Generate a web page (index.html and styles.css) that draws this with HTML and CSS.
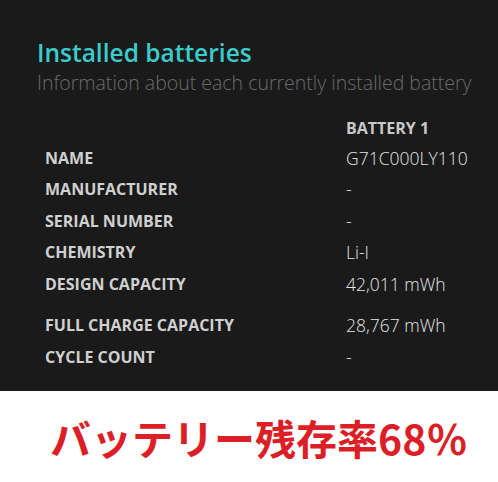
FILE: index.html
```html
<!DOCTYPE html>
<html>
<head>
<meta charset="utf-8">
<link rel="stylesheet" href="styles.css">
</head>
<body>
<div class="panel">
  <h1 class="title">Installed batteries</h1>
  <p class="subtitle">Information about each currently installed battery</p>
  <table class="specs">
    <tr class="head"><td class="label"></td><td class="col">BATTERY 1</td></tr>
    <tr><td class="label">NAME</td><td class="value">G71C000LY110</td></tr>
    <tr><td class="label">MANUFACTURER</td><td class="value">-</td></tr>
    <tr><td class="label">SERIAL NUMBER</td><td class="value">-</td></tr>
    <tr><td class="label">CHEMISTRY</td><td class="value">Li-I</td></tr>
    <tr class="gap-after"><td class="label">DESIGN CAPACITY</td><td class="value">42,011 mWh</td></tr>
    <tr><td class="label">FULL CHARGE CAPACITY</td><td class="value">28,767 mWh</td></tr>
    <tr><td class="label">CYCLE COUNT</td><td class="value">-</td></tr>
  </table>
</div>
<div class="caption">バッテリー残存率68％</div>
</body>
</html>
```
FILE: styles.css
```css
html, body {
  margin: 0;
  padding: 0;
  background: #ffffff;
}
body {
  width: 498px;
  height: 482px;
  overflow: hidden;
  font-family: "Open Sans", "Noto Sans", sans-serif;
}
.panel {
  background: #1a1a1a;
  height: 391px;
  box-sizing: border-box;
  padding: 37px 0 0 37px;
}
.title {
  margin: 0;
  font-size: 24.5px;
  font-weight: 600;
  color: #3ccbcb;
  line-height: 32px;
  letter-spacing: 0;
}
.subtitle {
  margin: 0;
  font-size: 19.5px;
  font-weight: 300;
  color: #6a6a6a;
  line-height: 28px;
  letter-spacing: 0;
}
.specs {
  border-collapse: collapse;
  margin: 17px 0 0 8px;
}
.specs td {
  padding: 0;
  height: 31.5px;
  vertical-align: middle;
}
.label {
  width: 301px;
  font-size: 16px;
  font-weight: 700;
  color: #d0d0d0;
}
.col {
  font-size: 16px;
  font-weight: 700;
  color: #c8c8c8;
}
.head td {
  height: 28px;
}
.value {
  font-size: 17.5px;
  font-weight: 300;
  color: #e4e4e4;
}
.gap-after td {
  padding-bottom: 10px;
  height: 31.5px;
}
.caption {
  height: 91px;
  display: flex;
  align-items: center;
  padding-left: 50px;
  font-family: "Noto Sans CJK JP", "Noto Sans", sans-serif;
  font-weight: 700;
  font-size: 41px;
  color: #dc1f26;
  letter-spacing: 0;
}
```
